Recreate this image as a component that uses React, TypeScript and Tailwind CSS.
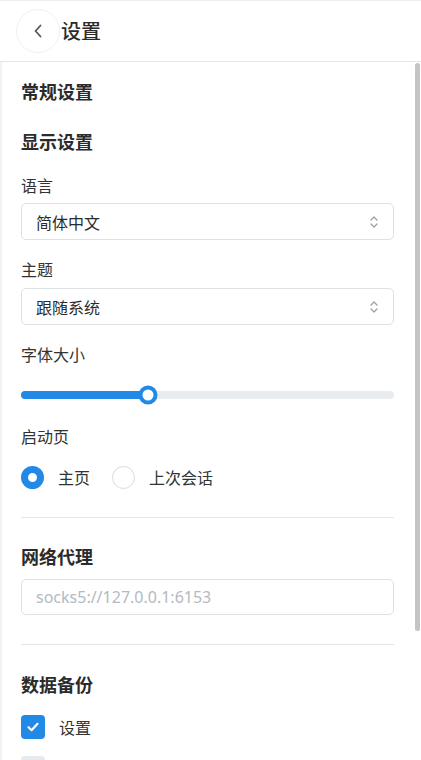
import { useState } from 'react'

const font = "font-['Noto_Sans_CJK_SC','Noto_Sans',sans-serif]"

function BackIcon() {
  return (
    <svg width="10" height="16" viewBox="0 0 10 16" fill="none">
      <path d="M7.5 2.5 2.5 8l5 5.5" stroke="#555" strokeWidth="1.8" strokeLinecap="round" strokeLinejoin="round" />
    </svg>
  )
}

function UpDownIcon() {
  return (
    <svg width="10" height="16" viewBox="0 0 10 16" fill="none">
      <path d="M2 6 5 3l3 3" stroke="#9aa1a9" strokeWidth="1.3" strokeLinecap="round" strokeLinejoin="round" />
      <path d="M2 10l3 3 3-3" stroke="#9aa1a9" strokeWidth="1.3" strokeLinecap="round" strokeLinejoin="round" />
    </svg>
  )
}

function SectionTitle({ children, className = '' }: { children: string; className?: string }) {
  return <div className={`text-[18px] leading-6 font-bold text-[#2b2b2b] ${className}`}>{children}</div>
}

function Label({ children, className = '' }: { children: string; className?: string }) {
  return <div className={`text-[16px] leading-[22px] text-[#333] ${className}`}>{children}</div>
}

function Select({ value, className = '' }: { value: string; className?: string }) {
  return (
    <div className={`h-[37px] flex items-center justify-between px-[14px] border border-[#dde2e7] rounded-[5px] ${className}`}>
      <span className="text-[16px] text-[#2b2b2b]">{value}</span>
      <UpDownIcon />
    </div>
  )
}

function Radio({ checked, label }: { checked: boolean; label: string }) {
  return (
    <div className="flex items-center">
      {checked ? (
        <span className="w-[23px] h-[23px] rounded-full border-[7px] border-[#2389e6] bg-white" />
      ) : (
        <span className="w-[23px] h-[23px] rounded-full border-[1.5px] border-[#d6dbe1] bg-white" />
      )}
      <span className="ml-[14px] text-[16px] text-[#333]">{label}</span>
    </div>
  )
}

function Checkbox({ checked, label, className = '' }: { checked: boolean; label?: string; className?: string }) {
  return (
    <div className={`flex items-center ${className}`}>
      {checked ? (
        <span className="w-[24px] h-[24px] rounded-[4px] bg-[#2389e6] flex items-center justify-center">
          <svg width="14" height="14" viewBox="0 0 14 14" fill="none">
            <path d="M2.5 7.2 5.6 10.2 11.5 3.8" stroke="#fff" strokeWidth="2.2" strokeLinecap="round" strokeLinejoin="round" />
          </svg>
        </span>
      ) : (
        <span className="w-[24px] h-[24px] rounded-[4px] bg-[#e6eaee]" />
      )}
      {label && <span className="ml-[14px] text-[16px] text-[#333]">{label}</span>}
    </div>
  )
}

export default function App() {
  const [size] = useState(34)

  return (
    <div className={`${font} w-[421px] h-[760px] flex flex-col bg-white overflow-hidden`}>
      {/* header */}
      <div className="h-[62px] shrink-0 flex items-center border-t border-[#efefef] border-b border-b-[#e6e6e6] pl-[16px]">
        <button className="w-[44px] h-[44px] rounded-full border border-[#f1f1f1] flex items-center justify-center">
          <BackIcon />
        </button>
        <span className="ml-[1px] text-[20px] font-medium text-[#2b2b2b]">设置</span>
      </div>

      {/* body + scrollbar */}
      <div className="flex-1 min-h-0 flex border-l-2 border-[#f2f2f2]">
        <div className="flex-1 overflow-hidden pl-[19px] pr-[21px] pt-[17px]">
          <SectionTitle>常规设置</SectionTitle>
          <SectionTitle className="mt-[26px]">显示设置</SectionTitle>

          <Label className="mt-[21px]">语言</Label>
          <Select value="简体中文" className="mt-[7px]" />

          <Label className="mt-[18px]">主题</Label>
          <Select value="跟随系统" className="mt-[8px]" />

          <Label className="mt-[18px]">字体大小</Label>
          <div className="mt-[18px] h-[24px] flex items-center">
            <div className="relative w-full h-[8px] rounded-full bg-[#e8ecef]">
              <div className="h-full rounded-full bg-[#2389e6]" style={{ width: `${size}%` }} />
              <span
                className="absolute top-1/2 -translate-y-1/2 -translate-x-1/2 w-[19px] h-[19px] rounded-full border-[4px] border-[#2389e6] bg-white"
                style={{ left: `${size}%` }}
              />
            </div>
          </div>

          <Label className="mt-[18px]">启动页</Label>
          <div className="mt-[18px] flex items-center gap-[22px]">
            <Radio checked label="主页" />
            <Radio checked={false} label="上次会话" />
          </div>

          <div className="mt-[28px] h-px bg-[#e3e7eb]" />

          <SectionTitle className="mt-[26px]">网络代理</SectionTitle>
          <div className="mt-[11px] h-[36px] flex items-center px-[14px] border border-[#dde2e7] rounded-[5px]">
            <span className="text-[16px] text-[#b3bac2] font-['Noto_Sans',sans-serif]">socks5://127.0.0.1:6153</span>
          </div>

          <div className="mt-[29px] h-px bg-[#e3e7eb]" />

          <SectionTitle className="mt-[27px]">数据备份</SectionTitle>
          <Checkbox checked label="设置" className="mt-[19px]" />
          <Checkbox checked={false} className="mt-[17px]" />
        </div>

        {/* scrollbar */}
        <div className="w-[6px] shrink-0 pt-[1px]">
          <div className="h-[568px] w-[5px] rounded-full bg-[#c4c4c4]" />
        </div>
      </div>
    </div>
  )
}
